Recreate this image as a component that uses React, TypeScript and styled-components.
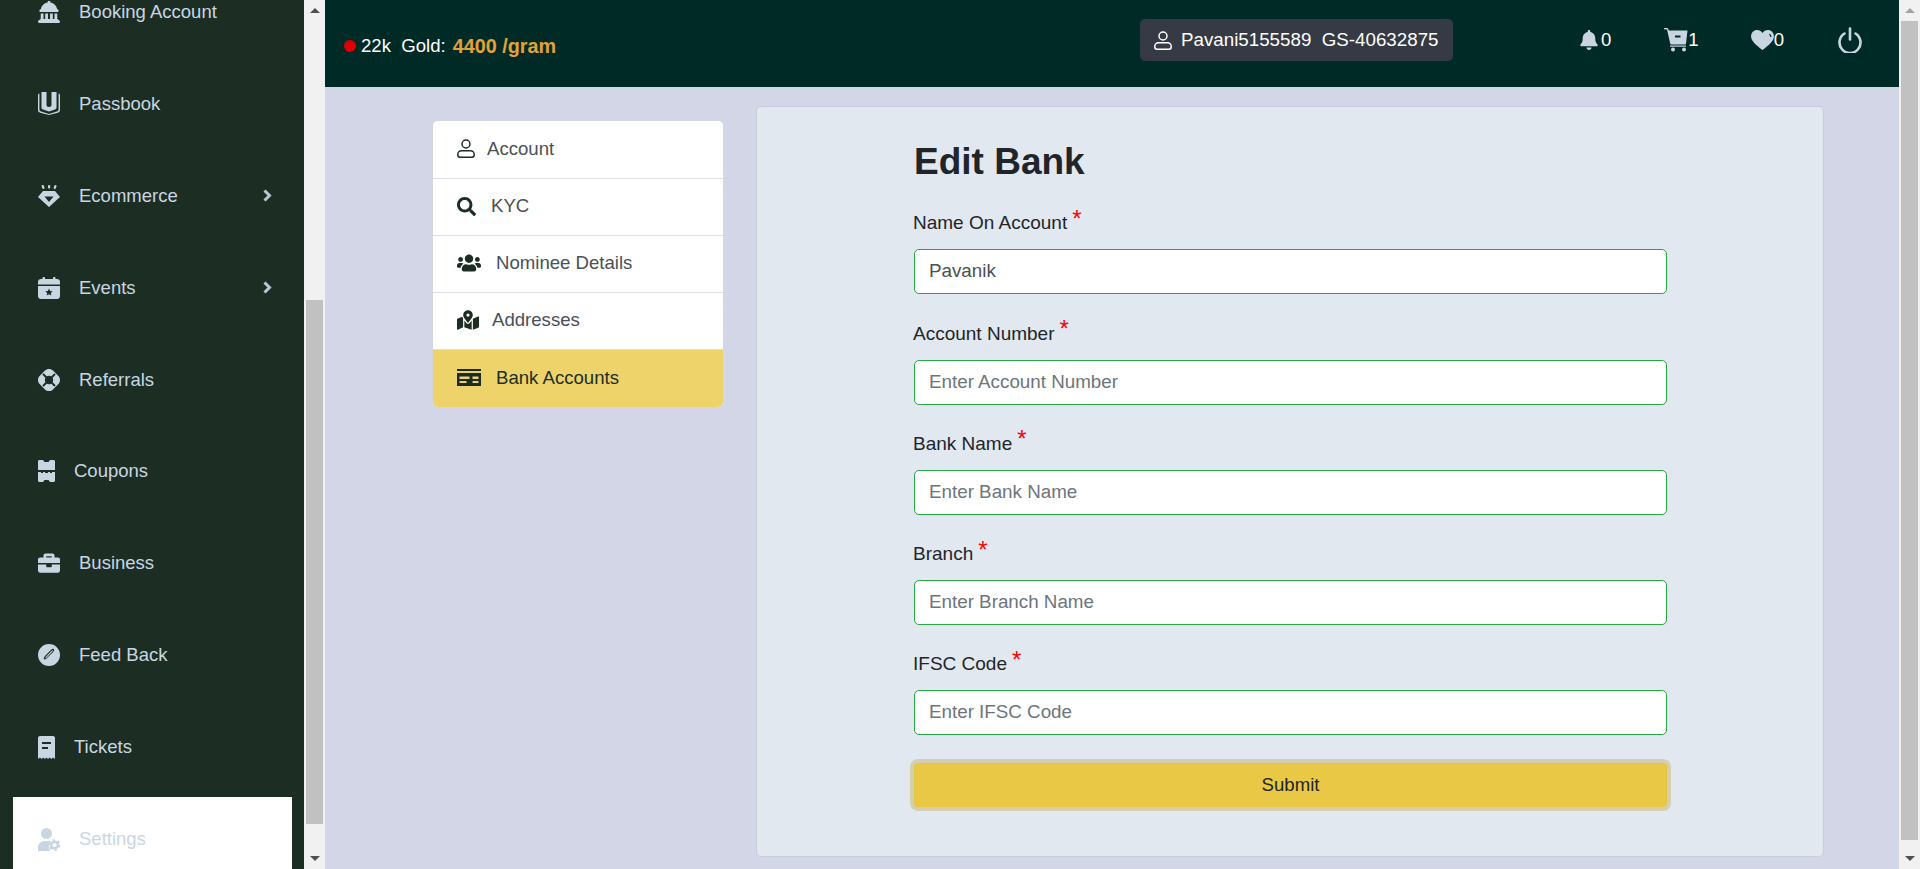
import React from "react";
import styled, { createGlobalStyle } from "styled-components";
import { FaBell, FaBriefcase, FaMapMarkedAlt, FaSearch, FaUsers } from "react-icons/fa";
import { FaLandmarkDome } from "react-icons/fa6";

const Global = createGlobalStyle`
  html, body { margin: 0; padding: 0; height: 100%; overflow: hidden; background: #d3d6e6; }
  body { font-family: "Liberation Sans", Arial, sans-serif; font-size: 16px; }
  * { box-sizing: border-box; }
`;

const Page = styled.div`
  display: flex;
  width: 1920px;
  height: 869px;
  overflow: hidden;
`;
const Sidebar = styled.aside`
  width: 304px;
  height: 869px;
  flex: none;
  background: #1c2e24;
  overflow: hidden;
  padding: 0 12px 0 13px;
`;
const SideList = styled.ul`
  list-style: none;
  margin: -30px 0 0;
  padding: 0;
  display: flex;
  flex-direction: column;
  gap: 7.9px;
`;
const SideItem = styled.li<{ $active?: boolean }>`
  height: 84px;
  flex: none;
  display: flex;
  align-items: center;
  padding: 0 20px 0 25px;
  color: #c9d6e2;
  background: ${(p) => (p.$active ? "#fff" : "transparent")};
  svg { flex: none; }
`;
const SideLabel = styled.span`
  margin-left: 19px;
  flex: 1;
  font-size: 18.5px;
  line-height: 22px;
`;
const ScrollBar = styled.div`
  width: 21px;
  height: 869px;
  flex: none;
  background: #f1f1f1;
  display: flex;
  flex-direction: column;
  align-items: center;
`;
const ScrollButton = styled.div<{ $h: number }>`
  height: ${(p) => p.$h}px;
  width: 100%;
  flex: none;
  display: flex;
  align-items: center;
  justify-content: center;
`;
const Arrow = styled.span<{ $down?: boolean; $dim?: boolean }>`
  width: 0;
  height: 0;
  border-left: 5px solid transparent;
  border-right: 5px solid transparent;
  ${(p) =>
    p.$down
      ? `border-top: 5px solid ${p.$dim ? "#a3a3a3" : "#505050"};`
      : `border-bottom: 5px solid ${p.$dim ? "#a3a3a3" : "#505050"};`}
`;
const Thumb = styled.div<{ $h: number; $top?: number }>`
  width: 17px;
  height: ${(p) => p.$h}px;
  flex: none;
  background: #c1c1c1;
  margin-top: ${(p) => p.$top ?? 0}px;
`;
const Spacer = styled.div`
  flex: 1;
`;
const Main = styled.main`
  flex: none;
  width: 1574px;
  display: flex;
  flex-direction: column;
`;
const Header = styled.header`
  height: 87px;
  flex: none;
  background: #002a26;
  color: #fff;
  display: flex;
  align-items: center;
  font-size: 18.6px;
`;
const Rate = styled.div`
  display: flex;
  align-items: center;
  margin: 5px 0 0 19px;
  width: 796px;
  white-space: pre;
`;
const Dot = styled.span`
  width: 12px;
  height: 12px;
  border-radius: 50%;
  background: #dc0000;
  margin-right: 5px;
`;
const Price = styled.b`
  color: #e3a237;
  margin-left: 7px;
  font-size: 19.8px;
`;
const UserBadge = styled.div`
  width: 313px;
  height: 42px;
  margin-top: -7px;
  background: #353a44;
  border-radius: 5px;
  display: flex;
  align-items: center;
  padding-left: 14px;
  white-space: pre;
`;
const UserText = styled.span`
  margin-left: 9px;
  font-size: 18.75px;
`;
const Counter = styled.div<{ $ml: number; $gap?: number }>`
  display: flex;
  align-items: center;
  gap: ${(p) => p.$gap ?? 0}px;
  margin: -7px 0 0 ${(p) => p.$ml}px;
  svg { color: #c9d6e2; }
`;
const Content = styled.div`
  display: flex;
  align-items: flex-start;
  padding-left: 108px;
`;
const NavCard = styled.nav`
  width: 290px;
  flex: none;
  margin-top: 34px;
  background: #fff;
  border-radius: 5px;
  overflow: hidden;
`;
const NavRow = styled.div<{ $active?: boolean }>`
  height: 57px;
  display: flex;
  align-items: center;
  padding: 0 0 2px 24px;
  color: ${(p) => (p.$active ? "#1c2e24" : "#495057")};
  background: ${(p) => (p.$active ? "#edd369" : "#fff")};
  font-size: 18.6px;
  & + & { border-top: 1px solid #dfdfe3; }
  &:last-child { height: 58px; }
  svg { color: #1c2e24; flex: none; }
`;
const NavLabel = styled.span<{ $ml: number }>`
  margin-left: ${(p) => p.$ml}px;
`;
const Card = styled.section`
  width: 1068px;
  height: 751px;
  flex: none;
  margin: 19px 0 0 33px;
  background: #e1e8f0;
  border-radius: 5px;
  border: 1px solid #c8ccd8;
  padding: 31px 156px 0 157px;
`;
const Title = styled.h1`
  margin: 0 0 18px;
  font-size: 37px;
  line-height: 48px;
  font-weight: 700;
  color: #212529;
`;
const Field = styled.div`
  margin-bottom: 20px;
  height: 90.25px;
  display: flex;
  flex-direction: column;
  justify-content: flex-end;
`;
const Label = styled.label`
  display: block;
  color: #212529;
  margin-bottom: 14px;
  line-height: 24px;
  font-size: 19px;
  margin-left: -1px;
`;
const Star = styled.span`
  color: #f00;
  font-size: 24px;
  position: relative;
  top: -2.5px;
  margin-left: 5px;
  line-height: 0;
`;
const Input = styled.input`
  display: block;
  width: 100%;
  height: 45px;
  padding: 0 14px 1px;
  border: 1px solid #28a745;
  border-radius: 5px;
  background: #fff;
  color: #495057;
  font: 18.8px "Liberation Sans", Arial, sans-serif;
  outline: none;
  &::placeholder { color: #6c757d; opacity: 1; }
`;
const Submit = styled.button`
  display: block;
  width: 100%;
  height: 44px;
  margin-top: 28px;
  background: #e8c844;
  border: 1px solid #e6c63e;
  border-radius: 4px;
  color: #212529;
  font: 18.6px "Liberation Sans", Arial, sans-serif;
  box-shadow: 0 0 0 4px rgba(190, 170, 80, 0.4);
`;

type IconProps = { w: number; h: number; children: React.ReactNode; vb: string };
const Svg = ({ w, h, vb, children }: IconProps) => (
  <svg width={w} height={h} viewBox={vb} fill="currentColor">{children}</svg>
);

const PassbookIcon = () => (
  <Svg w={22} h={23} vb="0 0 22 23">
    <path d="M3.500 0h5v12.500c0 1.800 1 2.500 2.500 2.500s2.500-.7 2.500-2.500V0h5v15.500c0 1-.6 1.700-1.600 2L11 19.500l-5.900-2c-1-.3-1.600-1-1.600-2z" />
    <path d="M0 3c0-.8.5-1.300 1.400-1.600V17.500c0 1 .6 1.700 1.800 2.100l7.800 2.300 7.800-2.300c1.200-.4 1.800-1.100 1.800-2.100V1.400C21.500 1.700 22 2.200 22 3v15c0 1.400-.8 2.300-2.200 2.800L11 23l-8.800-2.200C.8 20.300 0 19.400 0 18z" />
  </Svg>
);
const GemIcon = () => (
  <Svg w={22} h={22} vb="0 0 22 22">
    <rect x="4" y="0" width="2.200" height="4" rx="1" transform="rotate(-20 5 2)" />
    <rect x="10" y="0" width="2.200" height="3.600" rx="1" />
    <rect x="16" y="0" width="2.200" height="4" rx="1" transform="rotate(20 17 2)" />
    <path fillRule="evenodd" d="M5 6h12l5 6-11 10L0 12zM6.500 11.500h9L11 17z" />
  </Svg>
);
const CalendarIcon = () => (
  <Svg w={22} h={22} vb="0 0 22 22">
    <rect x="4.500" y="0" width="2.500" height="4" rx="1" />
    <rect x="15" y="0" width="2.500" height="4" rx="1" />
    <path d="M3 2h16c1.700 0 3 1.300 3 3v2.500H0V5c0-1.700 1.300-3 3-3z" />
    <path fillRule="evenodd" d="M0 9h22v10c0 1.700-1.300 3-3 3H3c-1.700 0-3-1.300-3-3zm11 2.500l1.100 2.400 2.600.3-1.900 1.800.5 2.600-2.300-1.300-2.300 1.300.5-2.600-1.900-1.800 2.600-.3z" />
  </Svg>
);
const BuoyIcon = () => (
  <Svg w={22} h={22} vb="0 0 22 22">
    <path d="M11 0c1.500 0 3 .6 4 1.600l5.400 5.400c1 1 1.600 2.500 1.600 4s-.6 3-1.600 4L15 20.400c-1 1-2.500 1.600-4 1.600s-3-.6-4-1.600L1.600 15C.6 14 0 12.500 0 11s.6-3 1.600-4L7 1.600C8 .6 9.500 0 11 0z" />
    <path d="M5 5l12 12M17 5L5 17" stroke="#1c2e24" strokeWidth="1.800" />
    <circle cx="11" cy="11" r="4.200" fill="#1c2e24" />
  </Svg>
);
const CouponIcon = () => (
  <Svg w={17} h={22} vb="0 0 17 22">
    <path d="M1.500 0H5l1.500 2h4L12 0h3.500C16.400 0 17 .6 17 1.500V10H0V1.500C0 .6.600 0 1.500 0z" />
    <path d="M0 12h3v1h2v-1h2v1h3v-1h2v1h2v-1h3v8.500c0 .9-.6 1.500-1.500 1.500H12l-1.500-2h-4L5 22H1.500C.6 22 0 21.400 0 20.500z" />
  </Svg>
);
const PenCircleIcon = () => (
  <Svg w={22} h={22} vb="0 0 22 22">
    <path fillRule="evenodd" d="M11 0a11 11 0 1 1 0 22 11 11 0 0 1 0-22zm2.600 5.200l-6.800 7c-.9 1-1.200 2-.8 2.700.5.800 1.600.7 2.600-.3l7-7.200c.7-.8.700-1.700.1-2.300-.6-.6-1.400-.6-2.100.1zm.3 1.300c.3-.3.700-.3.900-.1.200.2.200.6-.1.900l-6.300 6.500c-.4.400-.9.600-1.100.4-.2-.2 0-.7.400-1.100z" />
  </Svg>
);
const ReceiptIcon = () => (
  <Svg w={17} h={23} vb="0 0 17 23">
    <path fillRule="evenodd" d="M2 0h13c1.100 0 2 .9 2 2v21l-2-1.500-1.700 1.500-1.600-1.500-1.700 1.500-1.500-1.500L7 23l-1.700-1.500L3.700 23 2 21.500 0 23V2C0 .9.900 0 2 0zm2 6v2h9V6zm0 5v2h6v-2z" />
  </Svg>
);
const UserGearIcon = () => (
  <Svg w={22} h={23} vb="0 0 22 23">
    <circle cx="8.500" cy="5.500" r="5.500" />
    <path d="M0 23v-3.500C0 16 3 13 6.500 13h4c.8 0 1.500.1 2.200.4-1.800 2.300-2 6.500-.7 9.600z" />
    <circle cx="16.500" cy="17" r="3.300" fill="none" stroke="currentColor" strokeWidth="2.400" />
    <circle cx="16.500" cy="17" r="5" fill="none" stroke="currentColor" strokeWidth="1.800" strokeDasharray="2.600 2.640" />
  </Svg>
);
const PersonOutline = ({ w, h }: { w: number; h: number }) => (
  <svg width={w} height={h} viewBox="0 0 18 19" fill="none" stroke="currentColor" strokeWidth="1.500">
    <circle cx="9" cy="5" r="4" />
    <path d="M4.500 11.800h9c2 0 3.700 1.500 3.700 3.500v.8c0 1.200-1 2.100-2.200 2.100H3c-1.200 0-2.200-.9-2.200-2.100v-.8c0-2 1.700-3.500 3.700-3.500z" />
  </svg>
);
const CardIcon = () => (
  <Svg w={24} h={17} vb="0 0 24 17">
    <rect x="0" y="0" width="24" height="2" />
    <path fillRule="evenodd" d="M0 4h24v13H0zm2.500 3.500v2.500h10V7.500zm13 0v2.500h6V7.500zm-13 4.500v2h7v-2zm13 0v2h6v-2z" />
  </Svg>
);
const CartIcon = () => (
  <Svg w={24} h={24} vb="0 0 24 24">
    <path d="M0 0h3.500L5 2.500h18.500L22 15.500c-.1.700-.6 1-1.200 1H7.500c-.7 0-1.100-.4-1.300-1L3 1.500 0 1.200zm11 7.500v2h5.500v-2z" fillRule="evenodd" />
    <circle cx="9" cy="21.500" r="2" />
    <circle cx="20" cy="21.500" r="2" />
    <rect x="6" y="17.500" width="16" height="1.200" />
  </Svg>
);
const HeartIcon = () => (
  <Svg w={23} h={20} vb="0 0 24 21">
    <path d="M12 21C5 15.500 0 11.500 0 6.500 0 2.700 3 0 6.400 0 8.700 0 10.800 1.200 12 3.200 13.200 1.200 15.300 0 17.600 0 21 0 24 2.700 24 6.500c0 5-5 9-12 14.500z" />
    <path d="M19 4.500c1.200.6 1.800 1.500 1.800 2.800" fill="none" stroke="#002a26" strokeWidth="1.300" />
  </Svg>
);
const PowerIcon = () => (
  <svg width="24" height="26" viewBox="0 0 24 26" fill="none" stroke="#c9d6e2" strokeWidth="2.600" strokeLinecap="round">
    <path d="M12 1.500v11" />
    <path d="M6.500 6.500a10.500 10.500 0 1 0 11 0" />
  </svg>
);
const ChevronIcon = () => (
  <svg width="9" height="13" viewBox="0 0 9 13" fill="none" stroke="#bcc6ce" strokeWidth="3">
    <path d="M1.500 1.500l5 5-5 5" />
  </svg>
);

const sideItems: { label: string; icon: React.ReactNode; chevron?: boolean; active?: boolean }[] = [
  { label: "Booking Account", icon: <FaLandmarkDome size={22} /> },
  { label: "Passbook", icon: <PassbookIcon /> },
  { label: "Ecommerce", icon: <GemIcon />, chevron: true },
  { label: "Events", icon: <CalendarIcon />, chevron: true },
  { label: "Referrals", icon: <BuoyIcon /> },
  { label: "Coupons", icon: <CouponIcon /> },
  { label: "Business", icon: <FaBriefcase size={22} /> },
  { label: "Feed Back", icon: <PenCircleIcon /> },
  { label: "Tickets", icon: <ReceiptIcon /> },
  { label: "Settings", icon: <UserGearIcon />, active: true },
];

const navItems: { label: string; ml: number; icon: React.ReactNode; active?: boolean }[] = [
  { label: "Account", ml: 12, icon: <PersonOutline w={18} h={19} /> },
  { label: "KYC", ml: 15, icon: <FaSearch size={19} /> },
  { label: "Nominee Details", ml: 15, icon: <FaUsers size={24} /> },
  { label: "Addresses", ml: 13, icon: <FaMapMarkedAlt size={22} /> },
  { label: "Bank Accounts", ml: 15, icon: <CardIcon />, active: true },
];

const fields = [
  { label: "Name On Account", placeholder: "", value: "Pavanik" },
  { label: "Account Number", placeholder: "Enter Account Number" },
  { label: "Bank Name", placeholder: "Enter Bank Name" },
  { label: "Branch", placeholder: "Enter Branch Name" },
  { label: "IFSC Code", placeholder: "Enter IFSC Code" },
];

export default function App() {
  return (
    <Page>
      <Global />
      <Sidebar>
        <SideList>
          {sideItems.map((it) => (
            <SideItem key={it.label} $active={it.active}>
              {it.icon}
              <SideLabel>{it.label}</SideLabel>
              {it.chevron && <ChevronIcon />}
            </SideItem>
          ))}
        </SideList>
      </Sidebar>
      <ScrollBar>
        <ScrollButton $h={21}><Arrow /></ScrollButton>
        <Thumb $h={524} $top={279} />
        <Spacer />
        <ScrollButton $h={21}><Arrow $down /></ScrollButton>
      </ScrollBar>
      <Main>
        <Header>
          <Rate>
            <Dot />22k  Gold:<Price>4400 /gram</Price>
          </Rate>
          <UserBadge>
            <PersonOutline w={18} h={19} />
            <UserText>Pavani5155589  GS-40632875</UserText>
          </UserBadge>
          <Counter $ml={126} $gap={2}><FaBell size={20} />0</Counter>
          <Counter $ml={53}><CartIcon />1</Counter>
          <Counter $ml={52}><HeartIcon />0</Counter>
          <Counter $ml={54}><PowerIcon /></Counter>
        </Header>
        <Content>
          <NavCard>
            {navItems.map((n) => (
              <NavRow key={n.label} $active={n.active}>
                {n.icon}
                <NavLabel $ml={n.ml}>{n.label}</NavLabel>
              </NavRow>
            ))}
          </NavCard>
          <Card>
            <Title>Edit Bank</Title>
            {fields.map((f) => (
              <Field key={f.label}>
                <Label>{f.label}<Star>*</Star></Label>
                <Input placeholder={f.placeholder} defaultValue={f.value} />
              </Field>
            ))}
            <Submit>Submit</Submit>
          </Card>
        </Content>
      </Main>
      <ScrollBar>
        <ScrollButton $h={21}><Arrow $dim /></ScrollButton>
        <Thumb $h={819} />
        <Spacer />
        <ScrollButton $h={21}><Arrow $down /></ScrollButton>
      </ScrollBar>
    </Page>
  );
}
